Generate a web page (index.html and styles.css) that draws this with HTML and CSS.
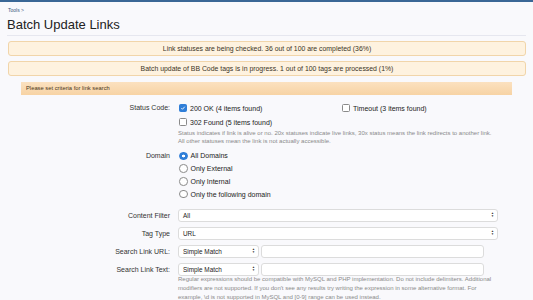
FILE: index.html
```html
<!DOCTYPE html>
<html lang="en">
<head>
    <meta charset="UTF-8">
    <meta name="viewport" content="width=device-width, initial-scale=1.0">
    <title>Batch Update Links</title>
    <link rel="stylesheet" href="styles.css">
</head>
<body>
    <div class="container">
        <div class="breadcrumb">Tools &gt;</div>
        <h1>Batch Update Links</h1>

        <div class="notice">Link statuses are being checked. 36 out of 100 are completed (36%)</div>
        <div class="notice">Batch update of BB Code tags is in progress. 1 out of 100 tags are processed (1%)</div>

        <div class="section-head">Please set criteria for link search</div>

        <div class="form">
            <div class="row">
                <div class="label">Status Code:</div>
                <div class="controls">
                    <div class="check-grid">
                        <div class="option"><span class="checkbox checked"><svg viewBox="0 0 8 8"><path d="M1.8 4.2 L3.3 5.7 L6.3 2.3" fill="none" stroke="#fff" stroke-width="1.2"/></svg></span>200 OK (4 items found)</div>
                        <div class="option"><span class="checkbox"></span>Timeout (3 items found)</div>
                        <div class="option"><span class="checkbox"></span>302 Found (5 items found)</div>
                    </div>
                    <p class="hint">Status indicates if link is alive or no. 20x statuses indicate live links, 30x status means the link redirects to another link.<br>All other statuses mean the link is not actually accessible.</p>
                </div>
            </div>

            <div class="row domain">
                <div class="label">Domain</div>
                <div class="controls">
                    <div class="option radio-row"><span class="radio checked"></span>All Domains</div>
                    <div class="option radio-row"><span class="radio"></span>Only External</div>
                    <div class="option radio-row"><span class="radio"></span>Only Internal</div>
                    <div class="option radio-row"><span class="radio"></span>Only the following domain</div>
                </div>
            </div>

            <div class="row field">
                <div class="label">Content Filter</div>
                <div class="controls">
                    <div class="select wide">All<span class="arrows">&#x25B2;<br>&#x25BC;</span></div>
                </div>
            </div>

            <div class="row field">
                <div class="label">Tag Type</div>
                <div class="controls">
                    <div class="select wide">URL<span class="arrows">&#x25B2;<br>&#x25BC;</span></div>
                </div>
            </div>

            <div class="row field">
                <div class="label">Search Link URL:</div>
                <div class="controls inline">
                    <div class="select small">Simple Match<span class="arrows">&#x25B2;<br>&#x25BC;</span></div>
                    <div class="text-input"></div>
                </div>
            </div>

            <div class="row field">
                <div class="label">Search Link Text:</div>
                <div class="controls">
                    <div class="inline">
                        <div class="select small">Simple Match<span class="arrows">&#x25B2;<br>&#x25BC;</span></div>
                        <div class="text-input"></div>
                    </div>
                    <p class="hint help">Regular expressions should be compatible with MySQL and PHP implementation. Do not include delimiters. Additional<br>modifiers are not supported. If you don't see any results try writing the expression in some alternative format. For<br>example, \d is not supported in MySQL and [0-9] range can be used instead.</p>
                </div>
            </div>
        </div>
    </div>
</body>
</html>
```

FILE: styles.css
```css
body {
    margin: 0;
    font-family: 'Liberation Sans', Arial, sans-serif;
    background-color: #f9f9fc;
    border-top: 2px solid #3a6796;
    color: #333;
}
.container {
    padding: 0 7px 0 8px;
}
.breadcrumb {
    padding-top: 5px;
    font-size: 5px;
    line-height: 6px;
    color: #3a5a80;
}
h1 {
    margin: 4px 0 0 -1px;
    padding-bottom: 2px;
    font-size: 13px;
    line-height: 16px;
    font-weight: normal;
    color: #222;
    border-bottom: 1px solid #e6e7ef;
}
.notice {
    margin-top: 5px;
    height: 13px;
    line-height: 13px;
    text-align: center;
    font-size: 6.9px;
    color: #3c3426;
    background-color: #fef2df;
    border: 1px solid #f1d5aa;
    border-radius: 3px;
}
.section-head {
    margin: 6px 14px 0 13px;
    height: 13px;
    line-height: 13px;
    padding-left: 5px;
    font-size: 5.8px;
    color: #4a3620;
    background: linear-gradient(#fbe1c0, #f7d3a4);
}
.form {
    margin-top: 6px;
}
.row {
    display: flex;
    gap: 8px;
}
.label {
    width: 162px;
    flex-shrink: 0;
    text-align: right;
    font-size: 7px;
    line-height: 14px;
    color: #333;
}
.controls {
    flex: 1;
}
.check-grid {
    display: grid;
    grid-template-columns: 163px 1fr;
}
.option {
    display: flex;
    align-items: center;
    height: 14px;
    font-size: 7px;
    color: #222;
}
.checkbox {
    width: 6px;
    height: 6px;
    margin: 0 3px 0 1px;
    border: 1px solid #8a8a8a;
    border-radius: 1.5px;
    background: #fff;
    display: flex;
}
.checkbox.checked {
    background: #2f7ed8;
    border-color: #2f7ed8;
}
.checkbox svg {
    width: 6px;
    height: 6px;
}
.hint {
    margin: 0;
    font-size: 6px;
    line-height: 8px;
    color: #8a8a8a;
}
.domain {
    margin-top: 4.6px;
}
.domain .label {
    line-height: 12.7px;
}
.radio-row {
    height: 12.7px;
}
.radio {
    width: 6.5px;
    height: 6.5px;
    margin: 0 3px 0 1px;
    border: 0.8px solid #8a8a8a;
    border-radius: 50%;
    background: #fff;
    box-sizing: content-box;
}
.radio.checked {
    border-color: #2f7ed8;
    background: radial-gradient(circle, #fff 0 1.3px, #2f7ed8 1.6px);
}
.field {
    margin-top: 5px;
}
.domain + .field {
    margin-top: 8.6px;
}
.field .label {
    line-height: 13px;
}
.select {
    position: relative;
    height: 11px;
    line-height: 11px;
    padding-left: 4px;
    font-size: 6.4px;
    color: #222;
    background: #fff;
    border: 1px solid #dcdcdc;
    border-radius: 3px;
}
.select.wide {
    width: 314px;
}
.select.small {
    width: 75px;
    flex-shrink: 0;
}
.arrows {
    position: absolute;
    right: 3px;
    top: 2.5px;
    font-size: 3px;
    line-height: 3px;
    color: #333;
}
.inline {
    display: flex;
    gap: 2px;
}
.text-input {
    width: 221px;
    height: 11px;
    background: #fff;
    border: 1px solid #dcdcdc;
    border-radius: 3px;
}
.help {
    margin-top: -0.5px;
    line-height: 8.8px;
    white-space: nowrap;
}
```
